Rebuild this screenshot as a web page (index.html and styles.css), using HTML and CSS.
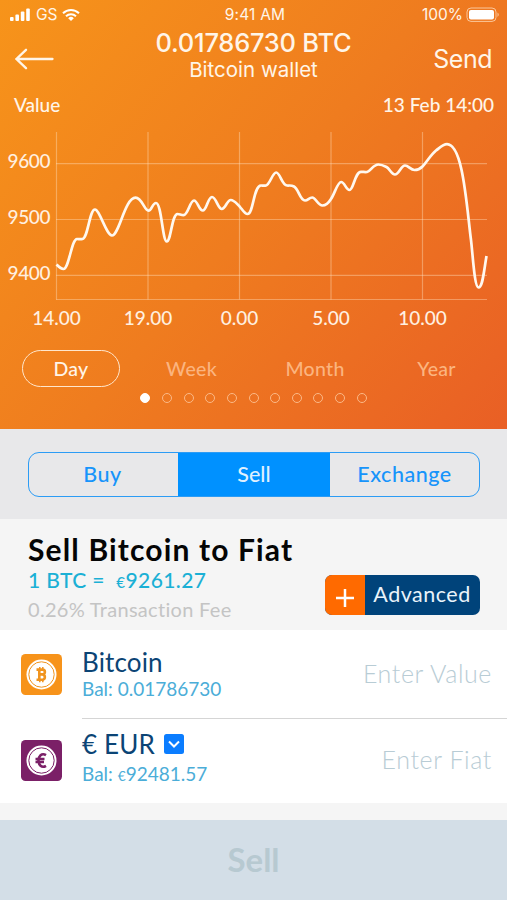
FILE: index.html
```html
<!DOCTYPE html>
<html lang="en">
<head>
    <meta charset="UTF-8">
    <meta name="viewport" content="width=device-width, initial-scale=1.0">
    <title>Bitcoin wallet</title>
    <link rel="stylesheet" href="styles.css">
</head>
<body>
    <!-- Wallet Header -->
    <header class="hero">
        <div class="status-bar">
            <div class="carrier">
                <svg class="signal" width="21" height="14" viewBox="0 0 21 14">
                    <rect x="0" y="9" width="3.6" height="4" rx="1" />
                    <rect x="5.4" y="6.5" width="3.6" height="6.5" rx="1" />
                    <rect x="10.8" y="3.5" width="3.6" height="9.5" rx="1" />
                    <rect x="16.2" y="0.5" width="3.6" height="12.5" rx="1" />
                </svg>
                <span class="carrier-name">GS</span>
                <svg class="wifi" width="18" height="14" viewBox="0 0 18 14">
                    <path d="M1 5.2 A11.5 11.5 0 0 1 17 5.2" />
                    <path d="M4 8.2 A7.2 7.2 0 0 1 14 8.2" />
                    <path class="wifi-dot" d="M9 13 L6.2 10.2 A4 4 0 0 1 11.8 10.2 Z" />
                </svg>
            </div>
            <span class="clock">9:41 AM</span>
            <div class="battery">
                <span class="percent">100%</span>
                <svg width="34" height="16" viewBox="0 0 34 16">
                    <rect class="battery-case" x="1" y="1" width="29" height="13.4" rx="4" />
                    <rect x="3" y="3" width="25" height="9.4" rx="2" />
                    <path class="battery-tip" d="M31.5 5.5 Q34 7.7 31.5 10 Z" />
                </svg>
            </div>
        </div>

        <nav class="nav-bar">
            <a class="back">
                <svg width="39" height="22" viewBox="0 0 39 22">
                    <path d="M37.5 11 H1.5 M11 1.8 L1.5 11 L11 20.2" />
                </svg>
            </a>
            <div class="wallet-title">
                <h1>0.01786730 BTC</h1>
                <p>Bitcoin wallet</p>
            </div>
            <a class="send">Send</a>
        </nav>

        <div class="chart-head">
            <span class="value-label">Value</span>
            <span class="value-date">13 Feb 14:00</span>
        </div>

        <!-- Price Chart -->
        <svg class="chart" width="507" height="214" viewBox="0 118 507 214">
            <g class="grid-lines">
                <path d="M56.5 132 V299.5 M148 132 V299.5 M239.5 132 V299.5 M331 132 V299.5 M422.5 132 V299.5" />
                <path d="M56 163.7 H487 M56 219.5 H487 M56 275.3 H487 M56 299.5 H487" />
            </g>
            <path class="price-line" d="M56.5 264.5 C59 267 61 269 63.5 269 C69 269 71.5 239 77 239 C79 239 80 239.5 82.5 239 C88 238 89.5 209.5 95 209.5 C99.5 209.5 106.5 235.5 112 235.5 C119 235.5 125 197.7 135.5 197.7 C142 197.7 144.5 210.7 148.5 210.7 C151.5 210.7 152.5 203 156 203 C161.5 203 162.5 241.5 166.8 241.5 C170.8 241.5 172 214 177.5 214 C179.5 214 181 215.2 183.5 215.2 C188 215.2 190 200.5 194 200.5 C197.5 200.5 199 210.5 202.8 210.5 C206.5 210.5 208 197 212 197 C216 197 218 209 221.8 209 C225.5 209 227 200 230.8 200 C234 200 236 203 239.5 206.3 C242 209 244.5 214 247.5 214 C253.5 214 253.5 185.5 261 185.5 C263 185.5 264 186 266 185.5 C270 184.5 272.5 172.5 276.2 172.5 C280 172.5 282 185.2 287 185.5 C290 185.7 291 185 294 186.5 C298.5 188.8 300 200.5 305 200.5 C308 200.5 309 197.5 312.3 197.5 C315.5 197.5 318 205.5 322.5 205.5 C325.5 205.5 328.5 203 331 199 C335 193 337.5 182 341.2 182 C344.5 182 346 190 349.5 190 C353.5 190 355 171.8 361 171.8 C363.5 171.8 364.5 172.3 367 172 C371 171 373 164.5 378.5 164.5 C381.5 164.5 383.5 165.5 386.5 167 C389.5 168.5 391.5 174.5 395 174.5 C399 174.5 401 165.5 405 165.5 C408.5 165.5 410.5 170 414.5 170 C417.5 170 420 169 422.5 166.5 C427 162 430 155.5 436 150.5 C440 147.5 443 144.2 447 144.2 C463 144.2 466.5 205 471 240 C473 257 474.5 287.5 478.5 287.5 C482.5 287.5 483.5 274 486.5 256" />
            <g class="axis-y">
                <text x="50" y="168">9600</text>
                <text x="50" y="224">9500</text>
                <text x="50" y="280">9400</text>
            </g>
            <g class="axis-x">
                <text x="56.5" y="324.5">14.00</text>
                <text x="148" y="324.5">19.00</text>
                <text x="239.5" y="324.5">0.00</text>
                <text x="331" y="324.5">5.00</text>
                <text x="422.5" y="324.5">10.00</text>
            </g>
        </svg>

        <div class="periods">
            <span class="period active">Day</span>
            <span class="period">Week</span>
            <span class="period">Month</span>
            <span class="period">Year</span>
        </div>
        <div class="dots">
            <i class="current"></i><i></i><i></i><i></i><i></i><i></i><i></i><i></i><i></i><i></i><i></i>
        </div>
    </header>

    <!-- Trade Tabs -->
    <div class="tabs">
        <div class="tab-group">
            <span class="tab">Buy</span>
            <span class="tab selected">Sell</span>
            <span class="tab">Exchange</span>
        </div>
    </div>

    <!-- Rate -->
    <section class="rate">
        <div class="rate-info">
            <h2>Sell Bitcoin to Fiat</h2>
            <p class="price">1 BTC =&nbsp; <small>€</small>9261.27</p>
            <p class="fee">0.26% Transaction Fee</p>
        </div>
        <div class="advanced">
            <span class="plus">
                <svg width="20" height="20" viewBox="0 0 20 20"><path d="M10 1 V19 M1 10 H19" /></svg>
            </span>
            <span class="advanced-label">Advanced</span>
        </div>
    </section>

    <!-- Amounts -->
    <section class="amounts">
        <div class="amount">
            <svg class="coin btc" width="41" height="41" viewBox="0 0 41 41">
                <rect width="41" height="41" rx="4.5" />
                <circle class="coin-face" cx="20.5" cy="20.5" r="15" />
                <circle class="coin-ring" cx="20.5" cy="20.5" r="12.7" />
                <path class="btc-sign" d="M15.5 15.6 H21.5 A2.4 2.4 0 0 1 21.5 20.4 H18 M21.5 20.4 A2.7 2.7 0 0 1 21.8 25.7 H15.5 M18.3 15.6 V25.7" />
                <path class="btc-ticks" d="M18.8 13 V15.5 M21.8 13 V15.5 M18.8 25.7 V28.2 M21.8 25.7 V28.2" />
            </svg>
            <div class="currency">
                <h3>Bitcoin</h3>
                <p>Bal: 0.01786730</p>
            </div>
            <span class="entry">Enter Value</span>
        </div>
        <div class="amount fiat">
            <svg class="coin eur" width="41" height="41" viewBox="0 0 41 41">
                <rect width="41" height="41" rx="4.5" />
                <circle class="coin-face" cx="20.5" cy="20.5" r="15" />
                <circle class="coin-ring" cx="20.5" cy="20.5" r="12.7" />
                <path class="eur-sign" d="M25 15.2 C20.5 12.4 17.5 16.5 17.5 20.5 C17.5 24.5 20.5 28.6 25 25.8 M14.5 19 H23.5 M14.5 22 H23" />
            </svg>
            <div class="currency">
                <h3>€ EUR
                    <svg class="dropdown" width="20" height="20" viewBox="0 0 20 20">
                        <rect width="20" height="20" rx="2.5" />
                        <path d="M5 7.5 L10 12.5 L15 7.5" />
                    </svg>
                </h3>
                <p>Bal: <small>€</small>92481.57</p>
            </div>
            <span class="entry">Enter Fiat</span>
        </div>
    </section>

    <!-- Submit -->
    <footer class="submit">Sell</footer>
</body>
</html>
```
FILE: styles.css
```css
/* General styling */
* {
    margin: 0;
    padding: 0;
    box-sizing: border-box;
}
body {
    width: 507px;
    height: 900px;
    overflow: hidden;
    display: flex;
    flex-direction: column;
    font-family: Lato, sans-serif;
    background-color: #f5f5f5;
    font-variant-ligatures: none;
}
svg {
    display: block;
    flex: none;
}
h1, h2, h3 {
    font-weight: 400;
}

/* Hero */
.hero {
    height: 429px;
    color: #fff5e8;
    background: linear-gradient(130deg, #f7941a 0%, #ef7c1f 50%, #e95f25 100%);
}
.status-bar {
    height: 29px;
    padding: 0 7px 0 10px;
    display: grid;
    grid-template-columns: 1fr auto 1fr;
    align-items: center;
    font: 15.5px Inter, sans-serif;
}
.carrier,
.battery {
    display: flex;
    align-items: center;
}
.carrier svg,
.battery svg {
    fill: #fff;
}
.carrier-name {
    margin: 0 4px 0 5px;
}
.clock {
    letter-spacing: 0.2px;
}
.carrier .wifi path {
    fill: none;
    stroke: #fff;
    stroke-width: 2;
}
.carrier .wifi .wifi-dot {
    fill: #fff;
    stroke: none;
}
.battery {
    justify-content: flex-end;
    gap: 3px;
}
.battery .battery-case {
    fill: none;
    stroke: #fbc79b;
    stroke-width: 1;
}
.battery .battery-tip {
    fill: #fbc79b;
}

/* Nav */
.nav-bar {
    height: 63px;
    padding: 0 15px;
    display: grid;
    grid-template-columns: 1fr auto 1fr;
    font-family: Inter, sans-serif;
}
.back {
    padding-top: 19px;
}
.back svg {
    fill: none;
    stroke: #fff5e8;
    stroke-width: 2.3;
    stroke-linecap: round;
}
.wallet-title {
    text-align: center;
}
.wallet-title h1 {
    font-size: 25.5px;
    line-height: 27px;
    font-weight: 500;
    letter-spacing: -0.25px;
}
.wallet-title p {
    font-size: 20.5px;
    line-height: 28px;
}
.send {
    padding-top: 14px;
    font-size: 25px;
    line-height: 32px;
    text-align: right;
    letter-spacing: -0.5px;
}

/* Chart */
.chart-head {
    height: 26px;
    padding: 0 13px 0 14px;
    display: flex;
    justify-content: space-between;
    font-size: 19px;
    line-height: 26px;
    font-weight: 500;
}
.chart {
    font-size: 19px;
    font-weight: 500;
}
.grid-lines path {
    fill: none;
    stroke: #ffe0c0;
    stroke-opacity: 0.4;
    stroke-width: 1.2;
}
.price-line {
    fill: none;
    stroke: #fff8ef;
    stroke-width: 2.7;
}
.chart text {
    fill: #fff0e0;
}
.axis-y {
    text-anchor: end;
    letter-spacing: -0.4px;
}
.axis-x {
    text-anchor: middle;
}

/* Periods */
.periods {
    height: 55px;
    padding: 18px 9px 0 22px;
    display: grid;
    grid-template-columns: 98px 143px 104px 1fr;
    font-size: 19.5px;
    font-weight: 500;
    letter-spacing: 0.3px;
}
.period {
    height: 37px;
    line-height: 38px;
    text-align: center;
    color: #fbb47f;
}
.period:last-child {
    padding-left: 8px;
}
.period.active {
    border: 1.6px solid #ffe6cc;
    border-radius: 19px;
    line-height: 35px;
    color: #fff5e8;
}
.dots {
    padding-top: 6px;
    display: flex;
    justify-content: center;
    gap: 11.65px;
}
.dots i {
    width: 10px;
    height: 10px;
    border: 1.5px solid #fbb987;
    border-radius: 50%;
}
.dots .current {
    background-color: #fff;
    border-color: #fff;
}

/* Tabs */
.tabs {
    height: 90px;
    padding: 23px 27px 0 28px;
    background-color: #e8e8ea;
}
.tab-group {
    height: 45px;
    display: grid;
    grid-template-columns: 149px 152px 1fr;
    border: 1px solid #2c9cf5;
    border-radius: 11px;
    overflow: hidden;
    color: #1794fb;
    font-size: 21.5px;
    line-height: 43px;
    font-weight: 500;
    letter-spacing: 0.5px;
    text-align: center;
}
.tab:first-child {
    padding-right: 2px;
}
.tab.selected {
    background-color: #0091ff;
    color: #dff0ff;
    letter-spacing: 0;
}

/* Rate */
.rate {
    height: 111px;
    padding: 0 27px 0 28px;
    display: flex;
    justify-content: space-between;
    background-color: #f5f5f5;
}
.rate h2 {
    margin-top: 13px;
    font-size: 30px;
    line-height: 34px;
    font-weight: 700;
    letter-spacing: 1.15px;
    color: #050505;
}
.rate .price {
    font-size: 21px;
    line-height: 28px;
    font-weight: 500;
    letter-spacing: 0.4px;
    color: #1bb0d5;
}
.price small,
.currency small {
    font-size: 0.72em;
}
.rate .fee {
    font-size: 20px;
    line-height: 28px;
    letter-spacing: 0.3px;
    margin-top: -1px;
    color: #c4c4c4;
}
.advanced {
    width: 155px;
    height: 40px;
    margin-top: 56px;
    display: flex;
    border-radius: 7px;
    overflow: hidden;
    background-color: #00437a;
}
.plus {
    width: 40px;
    padding: 13px 0 0 10px;
    background-color: #ff6a00;
}
.plus path {
    stroke: #fff;
    stroke-width: 2.5;
}
.advanced-label {
    flex: 1;
    padding-right: 1px;
    text-align: center;
    font-size: 21.5px;
    line-height: 39px;
    letter-spacing: 0.5px;
    color: #eaf3fa;
}

/* Amounts */
.amounts {
    height: 173px;
    background-color: #fff;
}
.amount {
    height: 89px;
    padding: 17px 15px 0 21px;
    display: grid;
    grid-template-columns: 61px 1fr auto;
}
.amount.fiat {
    height: 84px;
    padding-top: 0;
}
.coin {
    margin-top: 7px;
}
.fiat .coin {
    margin-top: 21px;
}
.btc rect {
    fill: #f7931a;
}
.eur rect {
    fill: #7b2067;
}
.coin-face {
    fill: #fff;
}
.coin-ring {
    fill: none;
    stroke-width: 1;
}
.btc .coin-ring,
.btc path {
    stroke: #f0941f;
}
.eur .coin-ring,
.eur path {
    stroke: #7b2067;
}
.btc-sign,
.eur-sign {
    fill: none;
    stroke-width: 2.6;
}
.btc-ticks {
    stroke-width: 1.5;
}
.currency h3 {
    display: flex;
    align-items: center;
    gap: 9px;
    font-size: 26px;
    line-height: 30px;
    letter-spacing: 0.15px;
    color: #0b4475;
}
.fiat h3 {
    margin-top: 10px;
}
.currency p {
    font-size: 19px;
    line-height: 24px;
    color: #4badd8;
    white-space: nowrap;
}
.fiat .currency p {
    margin-top: 3px;
}
.dropdown rect {
    fill: #0b7dff;
}
.dropdown path {
    fill: none;
    stroke: #fff;
    stroke-width: 2;
}
.entry {
    padding-top: 10px;
    font-size: 25px;
    line-height: 32px;
    font-weight: 300;
    letter-spacing: 0.6px;
    color: #b8ccd5;
}
.fiat .entry {
    padding-top: 24px;
}
.amount:first-child .currency {
    position: relative;
}
.amount:first-child .currency::after {
    content: "";
    position: absolute;
    left: 0;
    top: 71px;
    width: 425px;
    height: 1px;
    background-color: #d5d5d5;
}

/* Submit */
.submit {
    height: 80px;
    margin-top: auto;
    background-color: #d3dee7;
    color: #b7c9d1;
    font-size: 33px;
    line-height: 78px;
    font-weight: 700;
    text-align: center;
}
```
